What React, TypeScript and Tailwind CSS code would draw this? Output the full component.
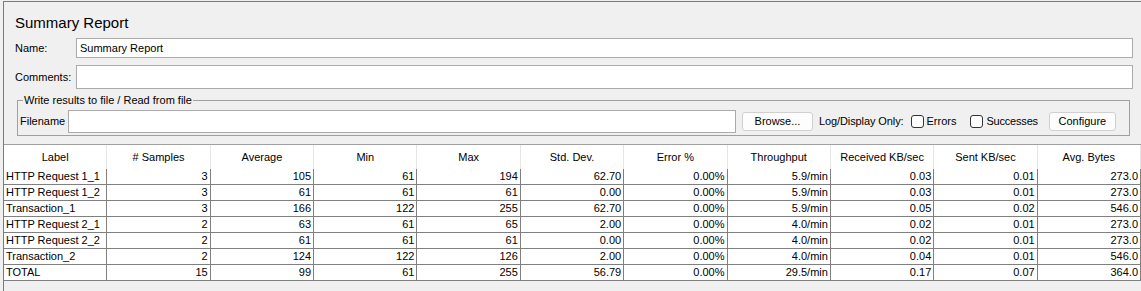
import React from "react";

const cols = [
  "Label",
  "# Samples",
  "Average",
  "Min",
  "Max",
  "Std. Dev.",
  "Error %",
  "Throughput",
  "Received KB/sec",
  "Sent KB/sec",
  "Avg. Bytes",
];

const rows: string[][] = [
  ["HTTP Request 1_1", "3", "105", "61", "194", "62.70", "0.00%", "5.9/min", "0.03", "0.01", "273.0"],
  ["HTTP Request 1_2", "3", "61", "61", "61", "0.00", "0.00%", "5.9/min", "0.03", "0.01", "273.0"],
  ["Transaction_1", "3", "166", "122", "255", "62.70", "0.00%", "5.9/min", "0.05", "0.02", "546.0"],
  ["HTTP Request 2_1", "2", "63", "61", "65", "2.00", "0.00%", "4.0/min", "0.02", "0.01", "273.0"],
  ["HTTP Request 2_2", "2", "61", "61", "61", "0.00", "0.00%", "4.0/min", "0.02", "0.01", "273.0"],
  ["Transaction_2", "2", "124", "122", "126", "2.00", "0.00%", "4.0/min", "0.04", "0.01", "546.0"],
  ["TOTAL", "15", "99", "61", "255", "56.79", "0.00%", "29.5/min", "0.17", "0.07", "364.0"],
];

function Checkbox() {
  return <span className="inline-block w-[13px] h-[13px] rounded-[3px] border border-[#333333] bg-white" />;
}

export default function App() {
  return (
    <div
      className="w-[1141px] h-[291px] bg-[#f0f0f0] overflow-hidden text-[11px] text-black"
      style={{ fontFamily: '"Liberation Sans", Arial, sans-serif' }}
    >
      <div className="mt-[1px] ml-[3px] h-[290px] border-t border-l border-[#7a7a7a] flex flex-col">
        {/* Title */}
        <div className="pl-[11px] pt-[11px] h-[20px] box-content text-[15px] leading-[20px]">Summary Report</div>
        {/* Name */}
        <div className="mt-[5px] flex items-center h-[20px] pl-[11px]">
          <span className="w-[61px]">Name:</span>
          <div className="w-[1057px] h-[20px] bg-white border border-[#ababab] flex items-center pl-[3px]">
            Summary Report
          </div>
        </div>
        {/* Comments */}
        <div className="mt-[7px] flex items-center h-[24px] pl-[11px]">
          <span className="w-[61px]">Comments:</span>
          <div className="w-[1057px] h-[24px] bg-white border border-[#ababab]" />
        </div>
        {/* Group box */}
        <div className="mt-[11px] ml-[13px] w-[1113px] h-[36px] border border-[#a0a0a0] relative flex items-center">
          <span className="absolute left-[5px] top-[-8px] px-[1px] bg-[#f0f0f0] leading-[14px]">
            Write results to file / Read from file
          </span>
          <div className="flex items-center mt-[6px]">
            <span className="ml-[2px] w-[48px]">Filename</span>
            <div className="w-[668px] h-[23px] bg-white border border-[#ababab]" />
            <div className="ml-[6px] w-[71px] h-[19px] rounded-[3px] border border-[#d0d0d0] bg-[#fdfdfd] flex items-center justify-center">
              Browse...
            </div>
            <span className="ml-[6px] tracking-[-0.1px]">Log/Display Only:</span>
            <span className="ml-[7px] flex items-center">
              <Checkbox />
            </span>
            <span className="ml-[3px]">Errors</span>
            <span className="ml-[14px] flex items-center">
              <Checkbox />
            </span>
            <span className="ml-[3px] tracking-[-0.2px]">Successes</span>
            <div className="ml-[11px] w-[67px] h-[19px] rounded-[3px] border border-[#d0d0d0] bg-[#fdfdfd] flex items-center justify-center">
              Configure
            </div>
          </div>
        </div>
        {/* Table */}
        <div className="mt-[8px] w-[1137px] border-t border-[#a0a0a0]">
          <div className="grid grid-cols-11 h-[24px] bg-white">
            {cols.map((c) => (
              <div key={c} className="flex items-center justify-center border-r border-[#e5e5e5]">
                {c}
              </div>
            ))}
          </div>
          {rows.map((r, i) => (
            <div key={i} className="grid grid-cols-11 h-[16px] bg-white border-b border-[#808080]">
              {r.map((v, j) => (
                <div
                  key={j}
                  className={
                    "leading-[15px] border-r border-[#808080] whitespace-nowrap overflow-hidden " +
                    (j === 0 ? "pl-[2px] text-left" : "pr-[2px] text-right")
                  }
                >
                  {v}
                </div>
              ))}
            </div>
          ))}
        </div>
      </div>
    </div>
  );
}
